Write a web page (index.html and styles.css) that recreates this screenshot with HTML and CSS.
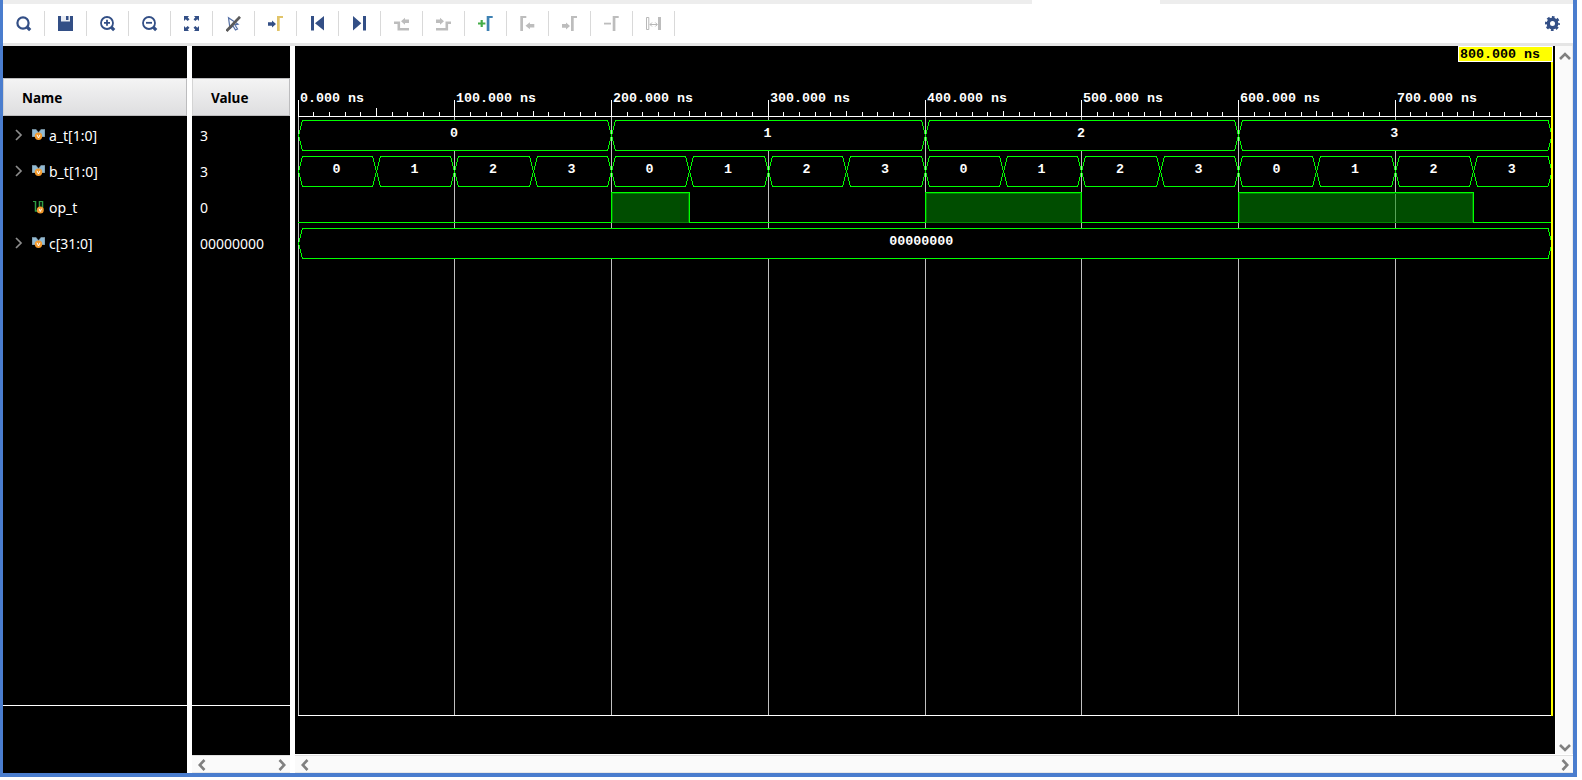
FILE: index.html
```
<!DOCTYPE html>
<html lang="en">
<head>
<meta charset="utf-8">
<title>Waveform</title>
<link rel="stylesheet" href="styles.css">
</head>
<body>
<svg class="defs" width="0" height="0">
  <defs>
    <path id="step" d="M0 0H6V2H2.7V15H0Z"/>
    <path id="arrow" d="M0 1.7H4V0L8 3.5L4 7V5.3H0Z"/>
    <g id="bus-icon">
      <path d="M0 0H4L6.5 3L9 0H13V8H0Z" fill="#6f8796"/>
      <path d="M.5 1H4L6.5 4L9 1H12.5V7.5H.5Z" fill="#91bad3"/>
      <circle cx="6.5" cy="7.3" r="3.7" fill="#f39a2d"/>
      <path d="M5 5.8L6.5 9L8 5.8" fill="none" stroke="#fff"/>
    </g>
  </defs>
</svg>
<div class="window">
  <div class="tabs"><div class="tab"></div></div>
  <div class="toolbar">
    <span class="tool"><svg viewBox="0 0 16 16"><circle cx="7" cy="7" r="5.6" class="ln"/><path d="M11 11L14.2 14.2" class="thick"/></svg></span>
    <span class="tool"><svg viewBox="0 0 16 16"><path d="M0 0H15V15H0Z" fill="#334f86"/><path d="M3 0H12V5.5H3Z" fill="#e8ebf2"/><path d="M8 0H10.5V4H8Z" fill="#334f86"/></svg></span>
    <span class="tool"><svg viewBox="0 0 16 16"><circle cx="7" cy="7" r="6" class="ln lt"/><path d="M11.2 11.2L14.2 14.2" class="thick"/><path d="M4 6.8H10M7 3.8V9.8" class="ln lt"/></svg></span>
    <span class="tool"><svg viewBox="0 0 16 16"><circle cx="7" cy="7" r="6" class="ln lt"/><path d="M11.2 11.2L14.2 14.2" class="thick"/><path d="M4 6.8H10" class="ln lt"/></svg></span>
    <span class="tool"><svg viewBox="0 0 16 16"><path d="M0 0H5L3.7 1.5L5.5 3.3L3.7 5L1.7 3.2L0 5ZM15 0H10L11.3 1.5L9.5 3.3L11.3 5L13.3 3.2L15 5ZM0 15H5L3.7 13.5L5.5 11.7L3.7 10L1.7 11.8L0 10ZM15 15H10L11.3 13.5L9.5 11.7L11.3 10L13.3 11.8L15 10Z" fill="#334f86"/></svg></span>
    <span class="tool"><svg viewBox="0 0 16 16"><path d="M2.5 1.8L12 8.2L8.8 8.8L11.5 13L9.5 14L7 10L4 12.5Z" fill="none" stroke="#5570a6" stroke-width="1.2"/><path d="M.5 15L14 .8" stroke="#5b5b5b" stroke-width="2.7"/></svg></span>
    <span class="tool"><svg viewBox="0 0 16 16"><use href="#arrow" y="4.5" fill="#334f86"/><use href="#step" x="9" fill="#e1c469"/></svg></span>
    <span class="tool"><svg viewBox="0 0 16 16"><path d="M1 0H4V14.5H1ZM14 0V14.5L5 7.3Z" fill="#334f86"/></svg></span>
    <span class="tool"><svg viewBox="0 0 16 16"><path d="M1 0L9.3 7.3L1 14.5ZM11 0H14V14.5H11Z" fill="#334f86"/></svg></span>
    <span class="tool off"><svg viewBox="0 0 16 16"><path d="M0 6.7H4.8V13.3H15" class="wire"/><use href="#arrow" transform="translate(15 1.7) scale(-1 1)"/></svg></span>
    <span class="tool off"><svg viewBox="0 0 16 16"><path d="M0 13.3H10.8V6.7H15" class="wire"/><use href="#arrow" y="1.7"/></svg></span>
    <span class="tool"><svg viewBox="0 0 16 16"><path d="M0 7.5H7.4M3.7 4V11" stroke="#45ad49" stroke-width="2.2"/><use href="#step" x="8.7" fill="#3e81b3"/></svg></span>
    <span class="tool off"><svg viewBox="0 0 16 16"><use href="#step" x="0.3"/><use href="#arrow" transform="translate(14.3 6.2) scale(-1.1 1)"/></svg></span>
    <span class="tool off"><svg viewBox="0 0 16 16"><use href="#arrow" y="6.4"/><use href="#step" x="9"/></svg></span>
    <span class="tool off"><svg viewBox="0 0 16 16"><path d="M0 6.7H7V8.5H0Z"/><use href="#step" x="8.7"/></svg></span>
    <span class="tool off"><svg viewBox="0 0 16 16"><path d="M.5 1.5H2.8V13.5H.5ZM4 8.5H11M6 6.5L4 8.5L6 10.5M9.3 6.5L11.3 8.5L9.3 10.5" fill="none" stroke="#b8b8b8"/><path d="M12 1H15V14H12Z"/></svg></span>
    <span class="gear"><svg viewBox="0 0 16 16"><circle cx="7.5" cy="7.5" r="6.2" fill="none" stroke="#334f86" stroke-width="2.6" stroke-dasharray="2.6 2.27" stroke-dashoffset="1.3"/><circle cx="7.5" cy="7.5" r="4.2" fill="none" stroke="#334f86" stroke-width="3.4"/></svg></span>
  </div>
  <div class="panes">
    <section class="names">
      <div class="head name-head">Name</div>
      <div class="signals">
        <div class="row"><svg class="chev" viewBox="0 0 8 12"><path d="M1 1L6 6L1 11"/></svg><svg class="sig" viewBox="0 0 14 14"><use href="#bus-icon"/></svg>a_t[1:0]</div>
        <div class="row"><svg class="chev" viewBox="0 0 8 12"><path d="M1 1L6 6L1 11"/></svg><svg class="sig" viewBox="0 0 14 14"><use href="#bus-icon"/></svg>b_t[1:0]</div>
        <div class="row"><svg class="chev" viewBox="0 0 8 12"></svg><svg class="sig" viewBox="0 1 14 14"><path d="M1 1.2H3.5V11H7.5V1.2H10.5V9" fill="none" stroke="#2f9e44" stroke-width="1.5"/><circle cx="8.3" cy="10" r="3.5" fill="#f39a2d"/><path d="M7 8.7L8.3 11.5L9.6 8.7" fill="none" stroke="#fff"/></svg>op_t</div>
        <div class="row"><svg class="chev" viewBox="0 0 8 12"><path d="M1 1L6 6L1 11"/></svg><svg class="sig" viewBox="0 0 14 14"><use href="#bus-icon"/></svg>c[31:0]</div>
      </div>
    </section>
    <section class="values">
      <div class="head value-head">Value</div>
      <div class="signals">
        <div class="row">3</div>
        <div class="row">3</div>
        <div class="row">0</div>
        <div class="row">00000000</div>
      </div>
      <div class="hbar">
        <svg viewBox="0 0 8 12"><path d="M6.5 1L1.7 6L6.5 11"/></svg>
        <svg viewBox="0 0 8 12"><path d="M1.5 1L6.3 6L1.5 11"/></svg>
      </div>
    </section>
    <section class="waves">
      <div class="plot">
        <svg id="wave" width="1260" height="708" viewBox="295 46 1260 708"></svg>
        <div class="vbar">
          <svg viewBox="0 0 12 8"><path d="M1 7L6 2L11 7"/></svg>
          <svg viewBox="0 0 12 8"><path d="M1 1L6 6L11 1"/></svg>
        </div>
      </div>
      <div class="hbar wide">
        <svg viewBox="0 0 8 12"><path d="M6.5 1L1.7 6L6.5 11"/></svg>
        <svg viewBox="0 0 8 12"><path d="M1.5 1L6.3 6L1.5 11"/></svg>
      </div>
    </section>
  </div>
</div>
<script src="wave.js"></script>
</body>
</html>
```

FILE: styles.css
```
* { box-sizing: border-box; }
body {
  margin: 0;
  background: #fff;
  font-family: "Noto Sans", "Open Sans", sans-serif;
  font-size: 14px;
}
svg { display: block; flex: none; }
.defs { position: absolute; }
.window {
  width: 1577px;
  height: 777px;
  display: flex;
  flex-direction: column;
  border: solid #4a7dce;
  border-width: 0 4px 4px 3px;
  background: #fff;
}
.tabs { height: 4px; background: #ededed; padding-left: 1029px; }
.tab { width: 128px; height: 4px; background: #fff; }
.toolbar {
  height: 42px;
  display: flex;
  align-items: flex-start;
  padding-top: 7px;
  border-bottom: 3px solid #e5e5e5;
}
.tool {
  width: 42px;
  height: 25px;
  padding: 5px 0 0 13px;
  border-right: 1px solid #d9d9d9;
}
.tool svg, .gear svg { width: 16px; height: 16px; }
.off { fill: #bdbdbd; }
.ln { fill: none; stroke: #334f86; stroke-width: 2.2; }
.lt { stroke-width: 1.8; }
.thick { stroke: #334f86; stroke-width: 3.2; }
.wire { fill: none; stroke: #bdbdbd; stroke-width: 2.6; }
.gear { margin-left: auto; padding: 5px 12px 0 0; }
.panes { flex: 1; min-height: 0; display: flex; gap: 5px; }
.names, .values { display: flex; flex-direction: column; background: #000; padding-top: 32px; }
.names { width: 184px; }
.values { width: 98px; }
.head {
  height: 38px;
  flex: none;
  line-height: 38px;
  border: 1px solid #bcbcbe;
  border-left-color: #d4d4d4;
  background: linear-gradient(#f4f4f4, #dedee0);
  color: #000;
  font-weight: 700;
  font-size: 13.5px;
}
.name-head { padding-left: 18px; }
.value-head { padding-left: 18px; }
.signals {
  height: 590px;
  flex: none;
  padding-top: 2px;
  border-bottom: 1px solid #fff;
}
.row { height: 36px; display: flex; align-items: center; color: #fff; line-height: 20px; }
.names .row { padding-left: 12px; }
.values .row { padding-left: 8px; }
.chev { width: 8px; height: 12px; margin: 0 9px 2px 0; }
.chev path { fill: none; stroke: #8c8c8c; stroke-width: 1.7; }
.sig { width: 14px; height: 14px; margin-right: 3px; }
.hbar {
  height: 18px;
  margin-top: auto;
  padding: 1px 4px 0 6px;
  display: flex;
  align-items: center;
  justify-content: space-between;
  background: #fafafa;
  border-top: 1px solid #e0e0e0;
  border-bottom: 1px solid #e8e8e8;
}
.hbar svg { width: 8px; height: 12px; }
.hbar path, .vbar path { fill: none; stroke: #808080; stroke-width: 2.6; }
.waves { flex: 1; display: flex; flex-direction: column; }
.plot { display: flex; height: 708px; }
#wave { background: #000; }
.vbar {
  flex: 1;
  margin-left: 1px;
  padding: 6px 1px 2px 3px;
  display: flex;
  flex-direction: column;
  align-items: center;
  justify-content: space-between;
  background: #fafafa;
  border-right: 1px solid #e8e8e8;
}
.vbar svg { width: 12px; height: 8px; }
#wave text {
  font: bold 13.33px "Liberation Mono", monospace;
  fill: #fff;
  white-space: pre;
}
#wave .mid { text-anchor: middle; }
#wave .dark { fill: #000; }
.tick { stroke: #fff; shape-rendering: crispEdges; }
.grid { stroke: #c0c0c0; shape-rendering: crispEdges; }
.bus { fill: #000; stroke: #0f0; shape-rendering: crispEdges; }
.trace { fill: none; stroke: #0f0; shape-rendering: crispEdges; }
.high { fill: #008c00; fill-opacity: .55; stroke: #008400; shape-rendering: crispEdges; }
```

FILE: wave.js
```
const START = 298, SCALE = 1.5675, END = 800;
const px = t => Math.floor(START + t * SCALE);
const out = [];
const line = (cls, x1, y1, x2, y2) =>
  out.push(`<path class="${cls}" d="M${x1} ${y1}L${x2} ${y2}"/>`);
const label = (cls, x, y, s) => out.push(`<text class="${cls}" x="${x}" y="${y}">${s}</text>`);

// Grid and time ruler
for (let t = 0; t < END; t += 10) {
  const x = px(t) + 0.5;
  if (t % 100 === 0) {
    line("grid", x, 117, x, 715);
    line("tick", x, 100, x, 117);
    label("", px(t) + 2, 102, t + ".000 ns");
  } else {
    line("tick", x, t === 50 ? 108 : t % 50 === 0 ? 111 : 112, x, 116);
  }
}
line("tick", 298, 116.5, 1552, 116.5);
line("tick", 298, 715.5, 1552, 715.5);

// Bus segment between two times, with slanted ends
function bus(t0, t1, y, text, shift) {
  const a = px(t0) + 0.5, b = px(t1) + (t1 === END ? 0 : 0.5), m = y + 15;
  out.push(`<path class="bus" d="M${a} ${m}L${a + 4} ${y}H${b - 4}L${b} ${m}L${b - 4} ${y + 30}H${a + 4}Z"/>`);
  label("mid", (a + b) / 2 - shift, y + 16.5, text);
}
for (let i = 0; i < 4; i++) bus(i * 200, i * 200 + 200, 120.5, i, 1);
for (let i = 0; i < 16; i++) bus(i * 50, i * 50 + 50, 156.5, i % 4, 1);

// Single-bit signal
let from = 298;
for (const [t0, t1] of [[200, 250], [400, 500], [600, 750]]) {
  const a = px(t0) + 0.5, b = px(t1) + 0.5;
  out.push(`<rect class="high" x="${a + 1}" y="193.5" width="${b - a - 2}" height="29"/>`);
  line("trace", from, 222.5, a, 222.5);
  line("trace", a, 223, a, 192);
  line("trace", a, 192.5, b, 192.5);
  line("trace", b, 192, b, 223);
  from = b;
}
line("trace", from, 222.5, 1552, 222.5);

bus(0, 800, 228.5, "00000000", 4);

// Time cursor
out.push('<rect x="1551" y="46" width="2" height="670" fill="#ff0"/>');
out.push('<rect x="1458.5" y="46.5" width="94" height="15" fill="#ff0" stroke="#fff"/>');
label("dark", 1460, 58, "800.000 ns");

document.getElementById("wave").innerHTML = out.join("");
```
